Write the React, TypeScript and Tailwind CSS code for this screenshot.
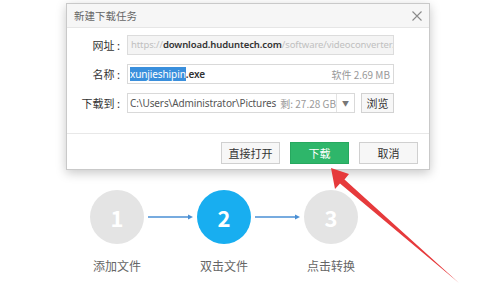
import React from 'react';

const cjk = { fontFamily: '"Noto Sans CJK SC", "Noto Sans", sans-serif' };
const latin = { fontFamily: '"Noto Sans", "Noto Sans CJK SC", sans-serif' };

function Field({ label, children }: { label: string; children: React.ReactNode }) {
    return (
        <div className="flex flex-row items-center h-[20px]">
            <div className="w-[54px] text-right text-[11px] text-[#333] pr-[1px] whitespace-nowrap">{label}</div>
            <div className="ml-[6px] flex flex-row h-full">{children}</div>
        </div>
    );
}

function Step({ n, label, active }: { n: string; label: string; active?: boolean }) {
    return (
        <div className="flex flex-col items-center w-[54px]">
            <div className={(active ? 'bg-[#18aef0]' : 'bg-[#e4e4e4]') + ' w-[54px] h-[54px] rounded-full flex items-center justify-center text-white text-[22px] font-bold'}>
                {n}
            </div>
            <div className="mt-[13px] text-[12px] text-[#666] whitespace-nowrap">{label}</div>
        </div>
    );
}

function StepArrow() {
    return (
        <svg width="53" height="54" viewBox="0 0 53 54">
            <line x1="4" y1="27" x2="46" y2="27" stroke="#4a8fd4" strokeWidth="1.6" />
            <path d="M44 24.5 L49 27 L44 29.5 Z" fill="#4a8fd4" />
        </svg>
    );
}

export default function App() {
    return (
        <div className="relative w-[499px] h-[307px] bg-white overflow-hidden" style={cjk}>
            {/* dialog */}
            <div className="ml-[66px] pt-[3px]">
                <div className="w-[364px] h-[167px] bg-white border border-[#c9c9c9] shadow-[0_3px_10px_rgba(0,0,0,0.22)] flex flex-col">
                    <div className="h-[24px] bg-[#f6f6f6] border-b border-[#e6e6e6] flex flex-row items-center justify-between pl-[7px] pr-[6px]">
                        <span className="text-[10.5px] text-[#666]">新建下载任务</span>
                        <svg width="12" height="12" viewBox="0 0 12 12">
                            <path d="M1.5 1.5 L10.5 10.5 M10.5 1.5 L1.5 10.5" stroke="#8a8a8a" strokeWidth="1.1" />
                        </svg>
                    </div>
                    <div className="flex flex-col gap-[9px] pt-[7px] h-[105px]">
                        <Field label="网址 :">
                            <div className="w-[267px] h-full bg-[#f4f4f4] border border-[#dcdcdc] flex items-center pl-[3px] overflow-hidden whitespace-nowrap text-[9.5px] tracking-[-0.1px]" style={latin}>
                                <span className="text-[#c0c0c0]">https://</span>
                                <span className="text-[#333] font-semibold">download.huduntech.com</span>
                                <span className="text-[#c0c0c0]">/software/videoconverter/</span>
                            </div>
                        </Field>
                        <Field label="名称 :">
                            <div className="w-[267px] h-full bg-white border border-[#d9d9d9] flex items-center justify-between pl-[2px] pr-[3px] whitespace-nowrap text-[10px]">
                                <span className="tracking-[-0.1px]" style={latin}>
                                    <span className="bg-[#3a8fdc] text-white">xunjieshipin</span>
                                    <span className="text-[#333] font-semibold">.exe</span>
                                </span>
                                <span className="text-[#999]">软件 2.69 MB</span>
                            </div>
                        </Field>
                        <Field label="下载到 :">
                            <div className="w-[228px] h-full bg-white border border-[#d9d9d9] flex flex-row overflow-hidden">
                                <div className="flex-1 min-w-0 flex items-center overflow-hidden whitespace-nowrap text-[10px] text-[#555] pl-[2px]">
                                    <span className="tracking-[-0.1px]" style={latin}>C:\Users\Administrator\Pictures</span>
                                    <span className="ml-[4px] text-[#999]">剩: 27.28 GB</span>
                                </div>
                                <div className="w-[18px] shrink-0 border-l border-[#e3e3e3] flex items-center justify-center text-[7px] text-[#777]">▼</div>
                            </div>
                            <div className="ml-[6px] w-[33px] h-full bg-[#f7f7f7] border border-[#d2d2d2] flex items-center justify-center text-[11px] text-[#333]">浏览</div>
                        </Field>
                    </div>
                    <div className="flex-1 border-t border-[#e8e8e8] flex flex-row justify-end items-start gap-[10px] pt-[8px] pr-[11px]">
                        <div className="w-[59px] h-[22px] bg-[#f7f7f7] border border-[#d0d0d0] flex items-center justify-center text-[11px] text-[#333]">直接打开</div>
                        <div className="w-[59px] h-[22px] bg-[#2eb66a] border border-[#27a85f] flex items-center justify-center text-[11px] text-white">下载</div>
                        <div className="w-[59px] h-[22px] bg-[#f7f7f7] border border-[#d0d0d0] flex items-center justify-center text-[11px] text-[#333]">取消</div>
                    </div>
                </div>
            </div>

            {/* steps */}
            <div className="flex flex-row items-start ml-[90px] mt-[20px]">
                <Step n="1" label="添加文件" />
                <StepArrow />
                <Step n="2" label="双击文件" active />
                <StepArrow />
                <Step n="3" label="点击转换" />
            </div>

            {/* red pointer arrow */}
            <svg className="absolute inset-0 pointer-events-none" width="499" height="307" viewBox="0 0 499 307">
                <path d="M331 168 L349 174 L344.5 179.5 L459 283 L340 183.5 L335 189 Z" fill="#e63a3c" />
            </svg>
        </div>
    );
}
